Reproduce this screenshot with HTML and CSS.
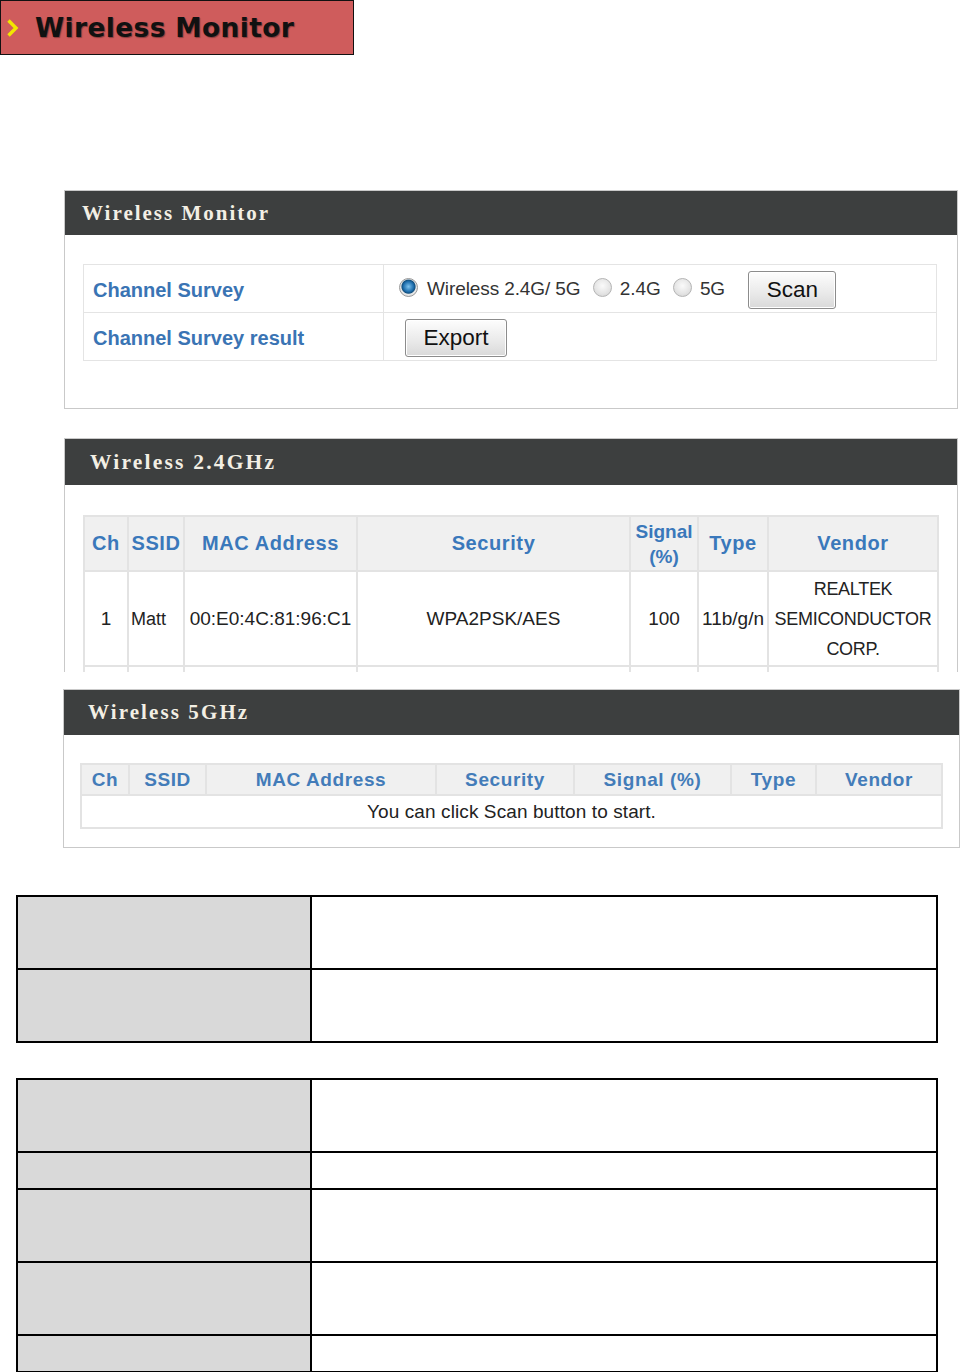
FILE: index.html
```html
<!DOCTYPE html>
<html lang="en">
<head>
<meta charset="utf-8">
<title>Wireless Monitor</title>
<link rel="stylesheet" href="styles.css">
</head>
<body>
<div class="banner">
  <svg class="chev" width="13" height="20" viewBox="0 0 13 20"><path d="M2.5 2.5 L10 10 L2.5 17.5" fill="none" stroke="#f2e600" stroke-width="3.4" stroke-linejoin="miter"/></svg>
  <span class="banner-title">Wireless Monitor</span>
</div>

<section class="panel p1">
  <h2 class="panel-head">Wireless Monitor</h2>
  <div class="panel-body">
    <table class="survey">
      <tr>
        <td class="lbl">Channel Survey</td>
        <td class="val">
          <span class="radio on"></span><span class="rtext">Wireless 2.4G/ 5G</span>
          <span class="radio"></span><span class="rtext">2.4G</span>
          <span class="radio"></span><span class="rtext">5G</span>
          <button class="btn scan">Scan</button>
        </td>
      </tr>
      <tr>
        <td class="lbl">Channel Survey result</td>
        <td class="val"><button class="btn export">Export</button></td>
      </tr>
    </table>
  </div>
</section>

<section class="panel p2">
  <h2 class="panel-head">Wireless 2.4GHz</h2>
  <div class="panel-body">
    <table class="scan24">
      <colgroup>
        <col class="c1"><col class="c2"><col class="c3"><col class="c4"><col class="c5"><col class="c6"><col class="c7">
      </colgroup>
      <tr class="head">
        <th>Ch</th><th>SSID</th><th>MAC Address</th><th>Security</th><th class="sig">Signal<br>(%)</th><th>Type</th><th>Vendor</th>
      </tr>
      <tr class="data">
        <td class="ctr">1</td><td class="lft">Matt</td><td>00:E0:4C:81:96:C1</td><td>WPA2PSK/AES</td><td>100</td><td>11b/g/n</td><td class="vendor">REALTEK<br>SEMICONDUCTOR<br>CORP.</td>
      </tr>
      <tr class="data">
        <td></td><td></td><td></td><td></td><td></td><td></td><td></td>
      </tr>
    </table>
  </div>
</section>

<section class="panel p3">
  <h2 class="panel-head">Wireless 5GHz</h2>
  <div class="panel-body">
    <table class="scan5">
      <colgroup>
        <col class="d1"><col class="d2"><col class="d3"><col class="d4"><col class="d5"><col class="d6"><col class="d7">
      </colgroup>
      <tr class="head">
        <th>Ch</th><th>SSID</th><th>MAC Address</th><th>Security</th><th>Signal (%)</th><th>Type</th><th>Vendor</th>
      </tr>
      <tr class="msg">
        <td colspan="7">You can click Scan button to start.</td>
      </tr>
    </table>
  </div>
</section>

<table class="doc doc1">
  <tr class="tall"><td class="k"></td><td class="v"></td></tr>
  <tr class="tall"><td class="k"></td><td class="v"></td></tr>
</table>

<table class="doc doc2">
  <tr class="tall"><td class="k"></td><td class="v"></td></tr>
  <tr class="short"><td class="k"></td><td class="v"></td></tr>
  <tr class="tall"><td class="k"></td><td class="v"></td></tr>
  <tr class="tall"><td class="k"></td><td class="v"></td></tr>
  <tr class="short"><td class="k"></td><td class="v"></td></tr>
</table>
</body>
</html>
```

FILE: styles.css
```css
html, body {
  margin: 0;
  padding: 0;
  background: #fff;
}
body {
  font-family: "Liberation Sans", Arial, sans-serif;
  width: 966px;
}

/* Banner */
.banner {
  box-sizing: border-box;
  width: 354px;
  height: 55px;
  background: #cf5c5c;
  border: 1px solid #111;
  display: flex;
  align-items: center;
  padding-left: 5px;
}
.chev {
  display: block;
  margin-right: 16px;
}
.banner-title {
  font-family: "DejaVu Sans", Verdana, sans-serif;
  font-weight: bold;
  font-size: 26.5px;
  color: #111;
  text-shadow: 1px 1px 1px rgba(0,0,0,0.35);
  letter-spacing: 0.35px;
}

/* Panels */
.panel {
  box-sizing: border-box;
  border: 1px solid #c9c9c9;
  background: #fff;
}
.panel-head {
  margin: 0;
  background: #3d3f3f;
  color: #f3efe4;
  font-family: "Liberation Serif", "Times New Roman", serif;
  font-weight: bold;
  font-size: 21px;
  letter-spacing: 2px;
  display: flex;
  align-items: center;
}
.p1 {
  margin: 135px 0 0 64px;
  width: 894px;
  height: 219px;
}
.p1 .panel-head { height: 44px; padding-left: 17px; }
.p1 .panel-body { padding: 29px 20px 0 18px; }

.p2 {
  margin: 29px 0 0 64px;
  width: 894px;
  height: 234px;
  overflow: hidden;
  border-bottom: none;
}
.p2 .panel-head { height: 46px; padding-left: 25px; font-size: 21.5px; letter-spacing: 2.2px; }
.p2 .panel-body { padding: 30px 20px 0 18px; }

.p3 {
  margin: 17px 0 0 63px;
  width: 897px;
  height: 159px;
}
.p3 .panel-head { height: 45px; padding-left: 24px; letter-spacing: 2.1px; }
.p3 .panel-body { padding: 28px 18px 0 16px; }

/* Channel survey table */
.survey {
  width: 854px;
  border-collapse: collapse;
}
.survey td {
  border: 1px solid #e4e4e4;
  height: 44px;
  padding: 3px 0 0 0;
}
.survey .lbl {
  width: 290px;
  padding-left: 9px;
  color: #3a74b4;
  font-weight: bold;
  font-size: 20px;
}
.survey .val {
  padding-left: 15px;
  font-size: 19px;
  color: #333;
  white-space: nowrap;
}
.radio {
  display: inline-block;
  width: 19px;
  height: 19px;
  border-radius: 50%;
  box-sizing: border-box;
  border: 1px solid #b5b5b5;
  background: radial-gradient(circle at 50% 40%, #fafafa 0%, #e6e6e6 55%, #cfcfcf 100%);
  vertical-align: -2px;
  margin-right: 8px;
}
.radio.on {
  border: 1px solid #9a9a9a;
  background: radial-gradient(circle at 50% 45%, #7fc3ee 0%, #1f6fae 40%, #12507f 52%, #e8e8e8 60%, #d3d3d3 100%);
  margin-right: 9px;
}
.rtext {
  margin-right: 7px;
  letter-spacing: -0.1px;
}
.btn {
  font-family: "Liberation Sans", Arial, sans-serif;
  font-size: 22.5px;
  color: #111;
  background: linear-gradient(#fdfdfd, #e9e9e9 60%, #d9d9d9);
  border: 1px solid #8c8c8c;
  border-radius: 3px;
  box-shadow: inset 0 0 0 1px #fff;
  padding: 0;
  height: 38px;
  vertical-align: middle;
}
.btn.scan {
  width: 88px;
  margin-left: 11px;
}
.btn.export {
  width: 102px;
  height: 38px;
  margin-left: 6px;
}

/* Scan tables */
.scan24, .scan5 {
  border-collapse: collapse;
  table-layout: fixed;
}
.scan24 { width: 854px; }
.scan5 { width: 861px; }
.scan24 th, .scan24 td,
.scan5 th, .scan5 td {
  border: 2px solid #e3e3e3;
  padding: 0;
  text-align: center;
}
.scan24 th, .scan5 th {
  background: #f0f0f0;
  color: #3a78bb;
  font-weight: bold;
  font-size: 20px;
  letter-spacing: 0.6px;
}
.scan24 .head th { height: 53px; line-height: 25px; }
.scan24 th.sig { font-size: 19px; letter-spacing: 0; }
.scan24 .data td {
  height: 93px;
  font-size: 19px;
  line-height: 30px;
  color: #222;
  white-space: nowrap;
}
.scan24 .data td.lft { text-align: left; padding-left: 2px; font-size: 18px; }
.scan24 .data td.vendor { font-size: 18px; letter-spacing: -0.3px; }
.c1 { width: 44px; }
.c2 { width: 56px; }
.c3 { width: 173px; }
.c4 { width: 273px; }
.c5 { width: 68px; }
.c6 { width: 70px; }
.c7 { width: 170px; }

.d1 { width: 48px; }
.d2 { width: 77px; }
.d3 { width: 230px; }
.d4 { width: 138px; }
.d5 { width: 157px; }
.d6 { width: 85px; }
.d7 { width: 126px; }
.scan5 th {
  color: #437cb9;
  font-size: 19px;
  letter-spacing: 0.6px;
}
.scan5 .head th { height: 29px; }
.scan5 .msg td {
  height: 31px;
  font-size: 19px;
  color: #222;
  letter-spacing: 0.1px;
}

/* Document tables */
.doc {
  border-collapse: collapse;
  margin-left: 16px;
  width: 922px;
}
.doc1 { margin-top: 47px; }
.doc2 { margin-top: 35px; }
.doc td {
  border: 2px solid #000;
  padding: 0;
}
.doc .k {
  width: 292px;
  background: #d9d9d9;
}
.doc .v {
  background: #fff;
}
.doc .tall td { height: 71px; }
.doc .short td { height: 35px; }
```
